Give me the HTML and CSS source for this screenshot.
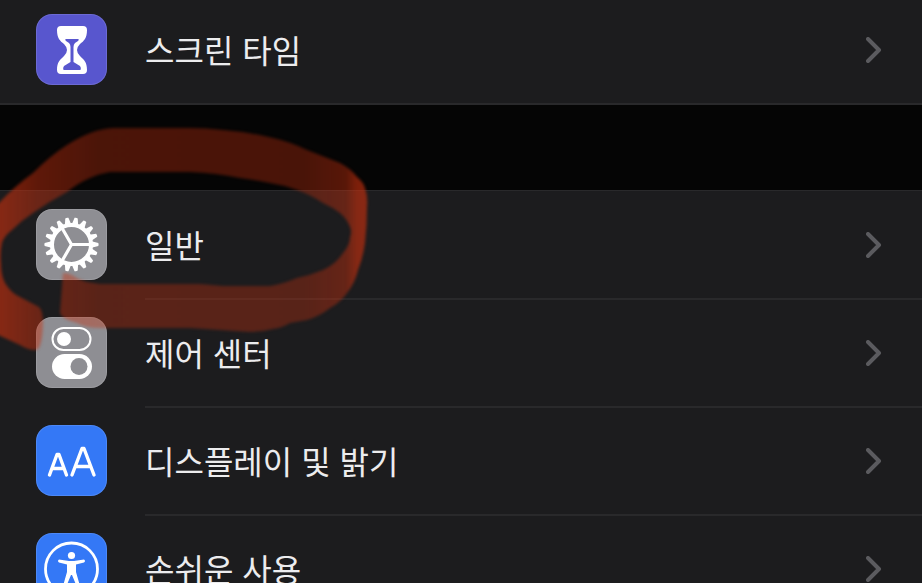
FILE: index.html
```html
<!DOCTYPE html>
<html lang="ko">
<head>
<meta charset="utf-8">
<meta name="viewport" content="width=device-width, initial-scale=1">
<title>설정</title>
<link rel="stylesheet" href="styles.css">
</head>
<body>
<main class="settings">
  <ul class="group group-top">
    <li class="item">
      <a class="row" href="#screen-time">
        <svg class="tile tile-purple" viewBox="0 0 71 71" aria-hidden="true">
          <path fill="#fff" d="M25 12H47Q51 12 51 16C51 24 48 27 44 30Q41 33 41 36Q41 39 44 42C48 46 51 48 51 56Q51 60 47 60H25Q21 60 21 56C21 48 24 46 28 42Q31 39 31 36Q31 33 28 30C24 27 21 24 21 16Q21 12 25 12Z"/>
          <path fill="#5856ce" d="M30 25H42Q43.500 25 42 27L39 29Q37.500 30.500 37.500 33V48L44 52Q45.500 54 44.500 56H27.500Q26.500 54 28 52L34.500 48V33Q34.500 30.500 33 29L30 27Q28.500 25 30 25Z"/>
        </svg>
        <span class="label">스크린 타임</span>
        <svg class="chevron" viewBox="0 0 16 26" aria-hidden="true"><path d="M2 2L13 13L2 24"/></svg>
      </a>
    </li>
  </ul>
  <ul class="group">
    <li class="item">
      <a class="row" href="#general">
        <svg class="tile tile-gray" viewBox="0 0 71 71" aria-hidden="true">
          <defs>
            <path id="tooth" d="M20 -3.2L26.800 -1.6Q27.500 0 26.800 1.600L20 3.200Z"/>
            <g id="teeth">
              <use href="#tooth"/>
              <use href="#tooth" transform="rotate(20)"/>
              <use href="#tooth" transform="rotate(40)"/>
              <use href="#tooth" transform="rotate(60)"/>
              <use href="#tooth" transform="rotate(80)"/>
              <use href="#tooth" transform="rotate(100)"/>
            </g>
          </defs>
          <g transform="translate(35.500 35.500)" fill="#fff">
            <use href="#teeth"/>
            <use href="#teeth" transform="rotate(120)"/>
            <use href="#teeth" transform="rotate(240)"/>
            <circle r="19.500" fill="none" stroke="#fff" stroke-width="4"/>
            <path d="M0 0H19M0 0L-9.500 -16.500M0 0L-9.500 16.500" fill="none" stroke="#fff" stroke-width="3.200"/>
          </g>
        </svg>
        <span class="label">일반</span>
        <svg class="chevron" viewBox="0 0 16 26" aria-hidden="true"><path d="M2 2L13 13L2 24"/></svg>
      </a>
    </li>
    <li class="item">
      <a class="row" href="#control-center">
        <svg class="tile tile-gray" viewBox="0 0 71 71" aria-hidden="true">
          <rect x="16.500" y="11" width="38" height="22" rx="11" fill="none" stroke="#fff" stroke-width="2"/>
          <circle cx="28" cy="22" r="7" fill="#fff"/>
          <rect x="16" y="37" width="40" height="25" rx="12.500" fill="#fff"/>
          <circle cx="43" cy="49.500" r="8.500" fill="#8e8e93"/>
        </svg>
        <span class="label">제어 센터</span>
        <svg class="chevron" viewBox="0 0 16 26" aria-hidden="true"><path d="M2 2L13 13L2 24"/></svg>
      </a>
    </li>
    <li class="item">
      <a class="row" href="#display">
        <svg class="tile tile-blue" viewBox="0 0 71 71" aria-hidden="true">
          <g fill="none" stroke="#fff" stroke-width="3.400" stroke-linecap="round" stroke-linejoin="round">
            <path d="M13.500 50L21 29.500H23L30.500 50M16.500 43.500H27.500"/>
            <path d="M36 50L46 23.500H48L58 50M39.500 41.500H54.500"/>
          </g>
        </svg>
        <span class="label">디스플레이 및 밝기</span>
        <svg class="chevron" viewBox="0 0 16 26" aria-hidden="true"><path d="M2 2L13 13L2 24"/></svg>
      </a>
    </li>
    <li class="item">
      <a class="row" href="#accessibility">
        <svg class="tile tile-blue" viewBox="0 0 71 71" aria-hidden="true">
          <circle cx="35.500" cy="36" r="26" fill="none" stroke="#fff" stroke-width="2.800"/>
          <circle cx="35.500" cy="22.500" r="3.600" fill="#fff"/>
          <path fill="#fff" d="M23 26.500L33 28H38L48 26.500Q50 28 48 29.500L40 31.500V39L44 53Q43 55 41 54L36 42H35L30 54Q28 55 27 53L31 39V31.500L23 29.500Q21 28 23 26.500Z"/>
        </svg>
        <span class="label">손쉬운 사용</span>
        <svg class="chevron" viewBox="0 0 16 26" aria-hidden="true"><path d="M2 2L13 13L2 24"/></svg>
      </a>
    </li>
  </ul>
  <svg class="marker" width="380" height="370" viewBox="0 0 380 370" aria-hidden="true">
    <defs>
      <linearGradient id="ink" gradientUnits="userSpaceOnUse" x1="0" y1="0" x2="380" y2="0">
        <stop offset="0" stop-color="#c8300e" stop-opacity=".62"/>
        <stop offset=".1" stop-color="#c8300e" stop-opacity=".46"/>
        <stop offset=".26" stop-color="#c8300e" stop-opacity=".36"/>
        <stop offset=".8" stop-color="#c8300e" stop-opacity=".35"/>
        <stop offset=".91" stop-color="#c8300e" stop-opacity=".43"/>
        <stop offset=".94" stop-color="#c8300e" stop-opacity=".62"/>
        <stop offset="1" stop-color="#c8300e" stop-opacity=".66"/>
      </linearGradient>
      <filter id="soft" color-interpolation-filters="sRGB"><feGaussianBlur stdDeviation="1.500"/></filter>
    </defs>
    <path fill="url(#ink)" filter="url(#soft)" d="M-6 208L0 202Q15 186 33 173Q50 156 67 145Q92 129 113 128H190Q206 128 223 130Q250 132 273 138Q291 142 307 150L340 163Q351 169 357 177Q364 183 365 188Q368 197 367 207Q367 225 365 243Q363 258 358 270Q355 283 347 293Q341 302 330 308Q320 316 307 320L290 323Q282 328 273 329Q262 332 250 332Q220 330 190 328H100Q86 328 77 323Q62 319 60 313L63 273Q68 273 72 275Q79 280 87 282L100 284H200Q212 285 223 286H270Q283 284 297 278Q311 275 323 270Q336 264 343 253Q350 245 350 237Q352 232 350 227Q347 219 340 213Q332 207 323 203Q311 195 297 190Q284 185 270 183Q256 180 240 178Q216 173 190 172H110Q98 174 90 178Q78 183 67 192Q50 201 33 213Q22 220 12 230Q4 236 2 243Q0 253 1 263Q1 275 5 283Q11 293 20 297L39 307Q45 313 42 337Q40 351 35 350Q28 350 20 345L-6 333Z"/>
  </svg>
</main>
</body>
</html>
```
FILE: styles.css
```css
* {
  box-sizing: border-box;
}

body {
  margin: 0;
  background: #050505;
  color: #ececee;
  font-family: "Noto Sans CJK KR", sans-serif;
  font-size: 32px;
  font-weight: 400;
  line-height: 48px;
}

.settings {
  position: relative;
  height: 100vh;
  overflow: hidden;
}

.group {
  margin: 0 0 85px;
  padding: 0;
  list-style: none;
  background: #1c1c1e;
  border-top: 1px solid #29292b;
  border-bottom: 2px solid #29292b;
}

.group-top {
  border-top: 0;
}

.row {
  position: relative;
  display: flex;
  align-items: center;
  gap: 38px;
  padding: 18px 40px 19px 36px;
  color: inherit;
  text-decoration: none;
}

.group-top .row {
  padding-top: 14px;
  padding-bottom: 18px;
}

.item + .item .row::before {
  content: "";
  position: absolute;
  top: -1px;
  left: 145px;
  right: 0;
  height: 2px;
  background: #29292b;
}

.tile {
  flex: none;
  width: 71px;
  height: 71px;
  border-radius: 16px;
  box-shadow: inset 0 0 0 1px rgba(255, 255, 255, .12);
}

.tile-purple {
  background: #5856ce;
}

.tile-gray {
  background: #8e8e93;
}

.tile-blue {
  background: #3478f6;
}

.label {
  flex: 1;
  padding-bottom: 2px;
}

.chevron {
  flex: none;
  width: 16px;
  height: 26px;
  fill: none;
  stroke: #5b5b5f;
  stroke-width: 4;
  stroke-linecap: round;
  stroke-linejoin: round;
}

.marker {
  position: absolute;
  top: 0;
  left: 0;
  pointer-events: none;
}
```
